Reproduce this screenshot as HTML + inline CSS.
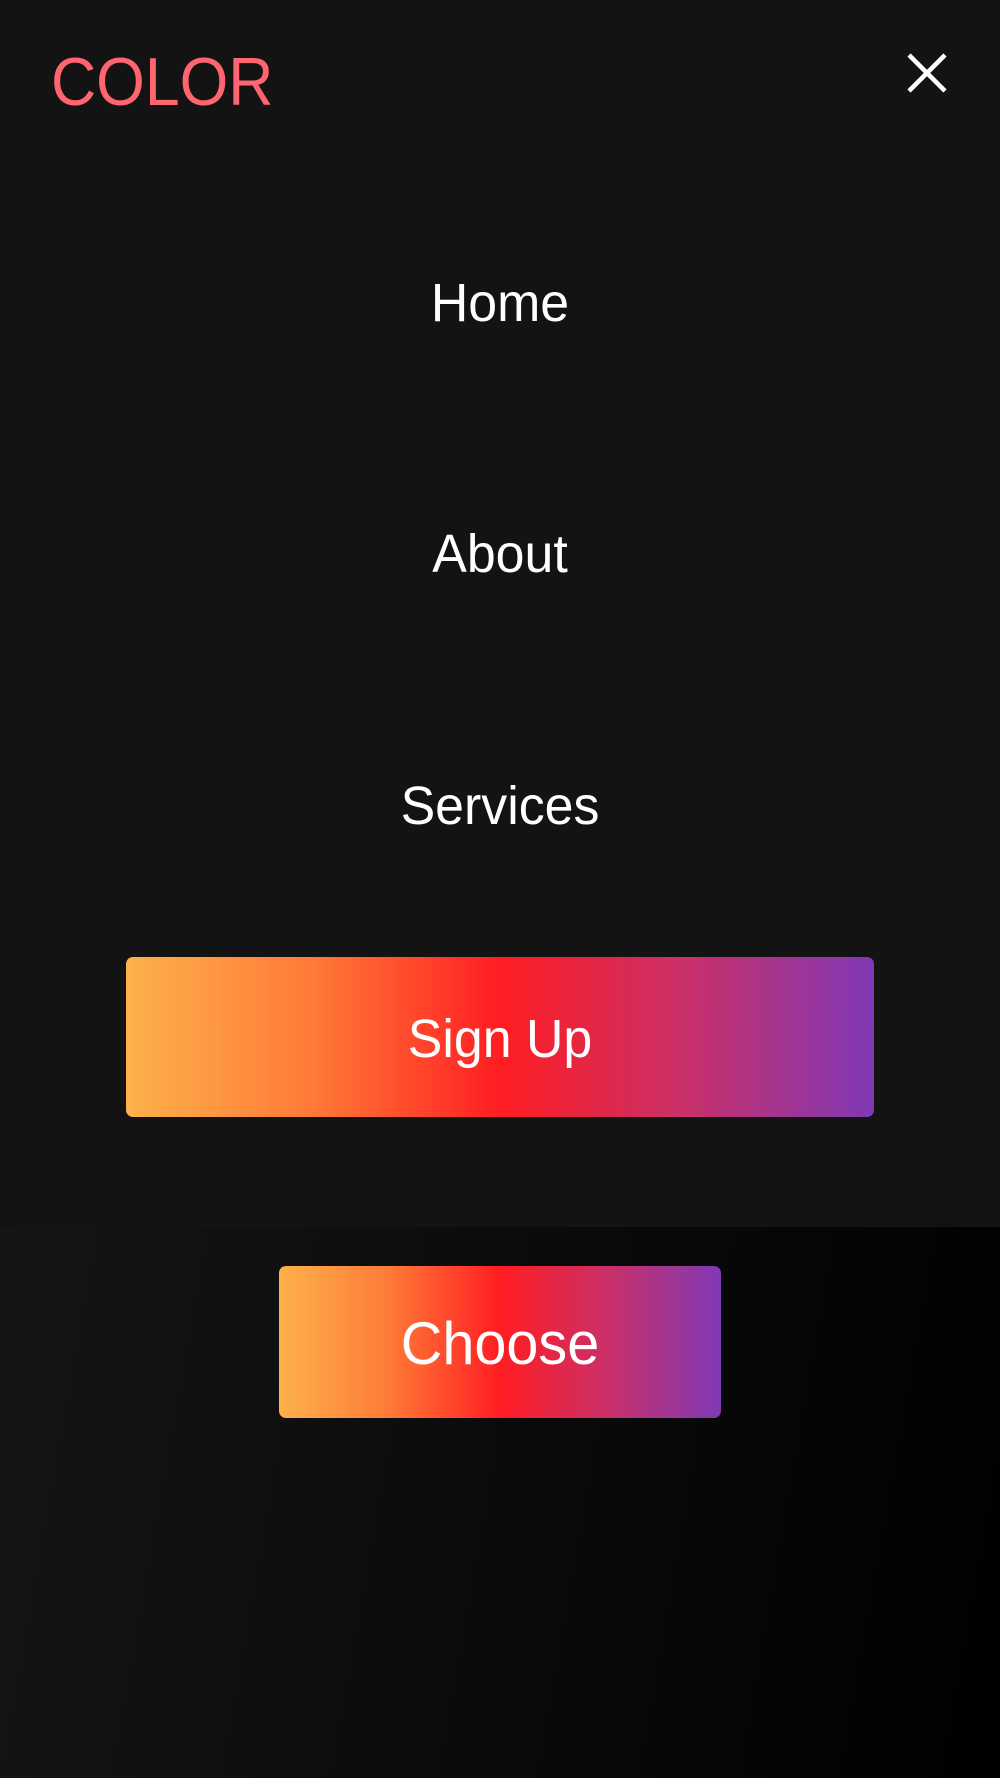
<!DOCTYPE html>
<html><head><meta charset="utf-8"><style>
*{margin:0;padding:0;box-sizing:border-box}
body{width:1000px;height:1778px;background:#131313;position:relative;overflow:hidden;font-family:"Liberation Sans",sans-serif}
.t{position:absolute;left:0;width:1000px;text-align:center;color:#fff;font-size:54px;line-height:54px;transform:scaleX(0.96)}
.logo{position:absolute;left:51px;top:48px;font-size:68px;line-height:68px;color:#ff6570;transform:scaleX(0.92);transform-origin:left}
.grad{background:linear-gradient(90deg,#fdb14c 0%,#ff7a37 25%,#ff1d22 50%,#c8306a 75%,#7f39b5 100%);border-radius:7px;position:absolute}
.bottom{position:absolute;left:0;top:1227px;width:1000px;height:551px;background:linear-gradient(100deg,#151515 0%,#0c0c0c 45%,#000 100%)}
</style></head><body>
<div class="logo">COLOR</div>
<svg style="position:absolute;left:906px;top:52px" width="42" height="42" viewBox="0 0 42 42"><path d="M3 3L39 39M39 3L3 39" stroke="#fff" stroke-width="4.5"/></svg>
<div class="t" style="top:276px">Home</div>
<div class="t" style="top:527px">About</div>
<div class="t" style="top:779px">Services</div>
<div class="grad" style="left:126px;top:957px;width:748px;height:160px"></div>
<div class="t" style="top:1012px">Sign Up</div>
<div class="bottom"></div>
<div class="grad" style="left:279px;top:1266px;width:442px;height:152px"></div>
<div class="t" style="top:1314px;font-size:60px;line-height:60px">Choose</div>
</body></html>
